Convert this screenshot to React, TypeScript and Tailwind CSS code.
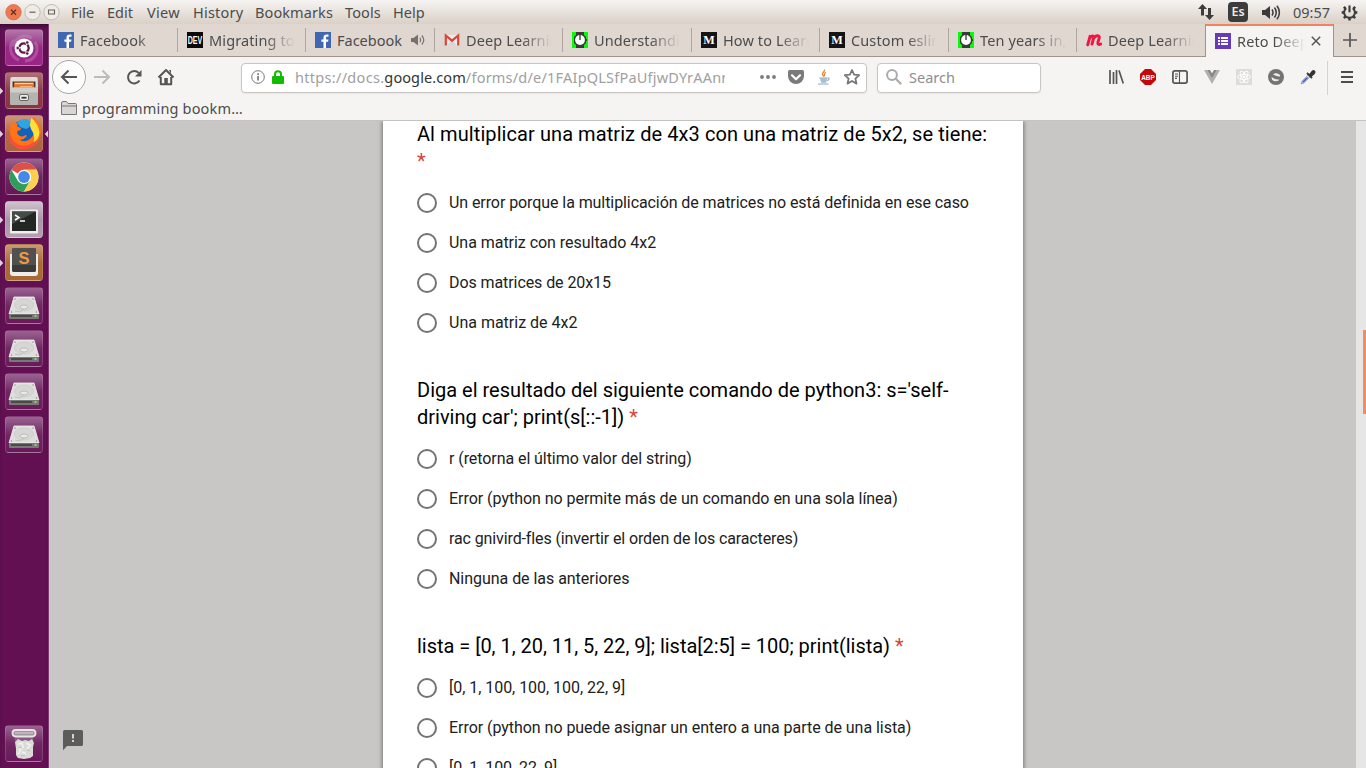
import type { ReactNode } from "react";

const ui = "font-['Noto_Sans',sans-serif] text-[14.5px] leading-5 text-[#4c4c4c] whitespace-nowrap";

const menu = [
  { label: "File", w: "w-[36px]" },
  { label: "Edit", w: "w-[40px]" },
  { label: "View", w: "w-[46px] tracking-[.3px]" },
  { label: "History", w: "w-[62px] tracking-[.2px]" },
  { label: "Bookmarks", w: "w-[90px] tracking-[.1px]" },
  { label: "Tools", w: "w-[48px] tracking-[.1px]" },
  { label: "Help", w: "w-[40px]" },
];

function Facebook() {
  return (
    <svg viewBox="0 0 16 16" className="size-4 shrink-0">
      <rect width="16" height="16" fill="#4267b2" />
      <path d="M11 16V9.8h2.1l.3-2.4H11V5.9c0-.7.2-1.2 1.2-1.2h1.3V2.6c-.2 0-1-.1-1.9-.1-1.9 0-3.1 1.1-3.1 3.2v1.7H6.4v2.4h2.1V16z" fill="#fff" />
    </svg>
  );
}

function Dev() {
  return (
    <svg viewBox="0 0 16 16" className="size-4 shrink-0">
      <rect width="16" height="16" fill="#0a0a0a" />
      <text x="8" y="11.700" textAnchor="middle" textLength="14.500" lengthAdjust="spacingAndGlyphs" className="fill-white font-['Liberation_Sans',sans-serif] text-[10px] font-bold">DEV</text>
    </svg>
  );
}

function Gmail() {
  return (
    <svg viewBox="0 0 16 16" className="size-4 shrink-0">
      <path d="M2 3h12v10.500H2z" fill="#eceaea" />
      <path d="M3 13.500 8 8.500l5 5z" fill="#d6d4d4" />
      <path d="M1.800 13.500V3.500L8 8.700l6.200-5.200v10" fill="none" stroke="#d9463a" strokeWidth="2.200" />
    </svg>
  );
}

function Watch() {
  return (
    <svg viewBox="0 0 16 16" className="size-4 shrink-0">
      <rect width="16" height="16" fill="#00ff00" />
      <path d="M4 0h8v3l2 2v6l-2 2v3H4v-3l-2-2V5l2-2z" fill="#3a3a3a" />
      <circle cx="8" cy="8" r="4.900" fill="#fff" />
      <path d="M8 3v5" stroke="#333" strokeWidth="1.300" />
      <path d="M14 7h1v2h-1z" fill="#3a3a3a" />
    </svg>
  );
}

function Medium() {
  return (
    <svg viewBox="0 0 16 16" className="size-4 shrink-0">
      <rect width="16" height="16" fill="#141414" />
      <text x="8" y="12.400" textAnchor="middle" textLength="11.500" lengthAdjust="spacingAndGlyphs" className="fill-white font-['Liberation_Serif',serif] text-[13.500px] font-bold">M</text>
    </svg>
  );
}

function Meetup() {
  return (
    <svg viewBox="0 0 16 16" className="size-4 shrink-0">
      <path d="M1.700 12.800 4 4.300M3.700 6.300C5 3.500 8 3 7.700 5.800L6 12M7.500 6.800C9 3.200 13.800 2.500 13.300 5.800c-.3 2-2.600 5.500-1 6.400.8.500 1.700.2 2.500-.2" fill="none" stroke="#ee1742" strokeWidth="2.900" strokeLinecap="round" />
    </svg>
  );
}

function Forms() {
  return (
    <svg viewBox="0 0 16 16" className="size-4 shrink-0">
      <rect width="16" height="16" fill="#673ab7" />
      <path d="M3 4h2v2H3zm3 0h7v2H6zM3 7h2v2H3zm3 0h7v2H6zm-3 3h2v2H3zm3 0h7v2H6z" fill="#fff" />
    </svg>
  );
}

function Speaker({ className }: { className: string }) {
  return (
    <svg viewBox="0 0 20 16" className={className}>
      <path d="M1 5.500h3L9 1.500v13L4 10.500H1z" fill="currentColor" />
      <path d="M11 5q2 3 0 6M13.500 3q3.500 5 0 10M16 1.200q4.800 6.800 0 13.600" fill="none" stroke="currentColor" strokeWidth="1.500" />
    </svg>
  );
}

function TabSpeaker() {
  return (
    <svg viewBox="0 0 14 12" className="ml-[3px] h-3 w-[14px] text-[#77716c]">
      <path d="M0 4h2.500L7 .500v11L2.500 8H0z" fill="currentColor" />
      <path d="M8.800 3.800q1.600 2.200 0 4.400M10.800 1.500q4 4.500 0 9" fill="none" stroke="currentColor" strokeWidth="1.200" />
    </svg>
  );
}

function TabLabel({ children, w }: { children: string; w: string }) {
  return (
    <span className={`${w} overflow-hidden tracking-[.12px] [mask-image:linear-gradient(to_right,black_calc(100%-30px),transparent)]`}>
      {children}
    </span>
  );
}

const tabs: { icon: ReactNode; title: string; sound?: boolean; w: string }[] = [
  { icon: <Facebook />, title: "Facebook", w: "w-[129px]" },
  { icon: <Dev />, title: "Migrating to", w: "w-[128px]" },
  { icon: <Facebook />, title: "Facebook", sound: true, w: "w-[129px]" },
  { icon: <Gmail />, title: "Deep Learning", w: "w-[128px]" },
  { icon: <Watch />, title: "Understanding", w: "w-[129px]" },
  { icon: <Medium />, title: "How to Learn", w: "w-[128px]" },
  { icon: <Medium />, title: "Custom eslint", w: "w-[129px]" },
  { icon: <Watch />, title: "Ten years in, n", w: "w-[128px]" },
  { icon: <Meetup />, title: "Deep Learning", w: "w-[128px]" },
];

function SystemBar() {
  return (
    <header className={`${ui} flex h-6 shrink-0 items-center bg-linear-to-b from-[#f6f4f2] to-[#dad0c7] pb-px`}>
      <svg viewBox="0 0 71 24" className="h-6 w-[71px] shrink-0">
        <circle cx="13.500" cy="12.200" r="7.700" fill="#ee7850" stroke="#d8694a" strokeWidth=".8" />
        <path d="m11 9.700 5 5m0-5-5 5" stroke="#5b3427" strokeWidth="1.300" />
        <circle cx="32.500" cy="12.200" r="7.700" fill="#efebe6" stroke="#c3bbb3" />
        <path d="M29.500 12.200h6" stroke="#66605a" strokeWidth="1.200" />
        <circle cx="51.500" cy="12.200" r="7.700" fill="#efebe6" stroke="#c3bbb3" />
        <path d="M48.500 10h6v4h-6z" fill="none" stroke="#66605a" strokeWidth="1.100" />
      </svg>
      {menu.map((m) => (
        <span key={m.label} className={m.w}>{m.label}</span>
      ))}
      <div className="ml-auto flex items-center">
        <svg viewBox="0 0 18 18" className="mt-px mr-[13px] size-[18px] text-[#3c3c3c]">
          <path d="M5.500 1 1 6h3v6.500h3V6h3zM12.500 17 17 12h-3V5h-3v7H8z" fill="currentColor" />
        </svg>
        <span className="mt-px mr-[13px] flex h-5 w-5 items-center justify-center rounded-sm bg-[#3c3c3c] text-[12.500px] font-semibold text-[#efebe7]">Es</span>
        <Speaker className="mt-px mr-3 h-[17px] w-5 text-[#3c3c3c]" />
        <span className="w-[48px]">09:57</span>
        <svg viewBox="0 0 18 18" className="mt-px mr-[8px] size-[17px]">
          <path d="M5.500 4.300a5.800 5.800 0 1 0 7 0" fill="none" stroke="#3c3c3c" strokeWidth="2.200" />
          <path d="M4.800 4.800 3 3M3.300 9H.7M4.800 13.200 3 15M9 14.500v3M13.200 13.200 15 15M14.700 9h2.600M13.200 4.800 15 3" stroke="#3c3c3c" strokeWidth="2.600" />
          <path d="M9 1.500v7.300" stroke="#3c3c3c" strokeWidth="2.200" />
        </svg>
      </div>
    </header>
  );
}

function TabStrip() {
  return (
    <div className={`${ui} flex h-[33px] shrink-0 bg-[#e0d7d0]`}>
      {tabs.map((t, i) => (
        <div key={i} className={`${t.w} flex shrink-0 items-center border-b border-[#9c948d] pb-0`}>
          <div className="flex h-6 flex-1 items-center gap-[6px] pl-[9px]">
            {t.icon}
            {t.sound ? <span>{t.title}</span> : <TabLabel w="w-[86px]">{t.title}</TabLabel>}
            {t.sound && <TabSpeaker />}
          </div>
          {i < 8 && <div className="h-6 w-px bg-[#aea7a1]" />}
        </div>
      ))}
      <div className="flex w-[129px] shrink-0 items-center gap-[6px] border-x border-[#9c948d] bg-[#f5f4f2] pl-[9px] shadow-[inset_0_2px_0_#f0845c]">
        <Forms />
        <TabLabel w="w-[68px]">Reto Deep L</TabLabel>
        <svg viewBox="0 0 10 10" className="size-[10px]"><path d="m.8.8 8.400 8.400m0-8.400L.8 9.200" stroke="#555" strokeWidth="1.500" /></svg>
      </div>
      <div className="flex flex-1 items-center justify-center border-b border-[#9c948d]">
        <svg viewBox="0 0 14 14" className="size-[14px]"><path d="M7 0v14M0 7h14" stroke="#555" strokeWidth="1.700" /></svg>
      </div>
    </div>
  );
}

function NavBar() {
  return (
    <div className={`${ui} flex h-[41px] shrink-0 items-center bg-[#f5f4f2]`}>
      <svg viewBox="0 0 192 41" className="h-[41px] w-[192px] shrink-0" fill="none">
        <circle cx="20" cy="20" r="16.500" fill="#fcfcfc" stroke="#a9a7a5" />
        <path d="M28 20H13.500m6-6.500-6.500 6.500 6.500 6.500" stroke="#555" strokeWidth="2" />
        <path d="M45 20h14.500m-6-6.500 6.500 6.500-6.500 6.500" stroke="#bbb" strokeWidth="2" />
        <path d="M90.500 23.500a6.200 6.200 0 1 1-.8-7.600" stroke="#555" strokeWidth="2" />
        <path d="M92.500 13v6.500h-6.500z" fill="#555" />
        <path d="m109.500 20.500 7.500-7.500 7.500 7.500M111.800 20v7.200h10.400V20" stroke="#555" strokeWidth="2" strokeLinejoin="round" />
        <path d="M115.300 21h3.500v6h-3.500z" fill="#555" />
        <path d="M120 13h2v4z" fill="#555" />
      </svg>
      <div className="flex h-[30px] w-[626px] shrink-0 items-center rounded border border-[#c8c5c2] bg-white pb-px pl-[9px] shadow-[0_1px_2px_rgba(0,0,0,.06)]">
        <svg viewBox="0 0 14 14" className="size-[14px]"><circle cx="7" cy="7" r="6.300" fill="none" stroke="#777" /><path d="M6.200 6h1.700v4.500H6.200zM6.200 3.300h1.700v1.600H6.200z" fill="#777" /></svg>
        <svg viewBox="0 0 12 14" className="ml-[7px] h-[14px] w-3"><path d="M3 7V4.200a3 3 0 0 1 6 0V7" fill="none" stroke="#12bc00" strokeWidth="2" /><rect y="6" width="12" height="8" rx="1" fill="#12bc00" /></svg>
        <span className="ml-[11px] w-[430px] overflow-hidden tracking-[.21px] text-[#a0a0a0]">
          <span className="tracking-[.3px]">https://docs.</span><span className="tracking-[.1px] text-[#333]">google.com</span>/forms/d/e/1FAIpQLSfPaUfjwDYrAAnn
        </span>
        <svg viewBox="0 0 16 4" className="ml-[35px] h-1 w-4 shrink-0" fill="#7a7a7a"><circle cx="2" cy="2" r="1.900" /><circle cx="8" cy="2" r="1.900" /><circle cx="14" cy="2" r="1.900" /></svg>
        <svg viewBox="0 0 16 15" className="ml-3 h-[15px] w-4 shrink-0"><path d="M1.500 0h13Q16 0 16 1.500V6a8 8 0 0 1-16 0V1.500Q0 0 1.500 0z" fill="#7a7a7a" /><path d="m4 5.300 4 3.900 4-3.900" fill="none" stroke="#fff" strokeWidth="2.200" strokeLinecap="round" strokeLinejoin="round" /></svg>
        <svg viewBox="0 0 16 16" className="ml-3 size-4 shrink-0" fill="none">
          <path d="M8.500.5c1 2-3 3-2 5.200l1.300 1.800M9.800 3.200C7.500 4.500 8.800 5.500 8.200 7.500" stroke="#ef8535" strokeWidth="1.300" />
          <path d="M3.500 9h8l-1 4.500h-5z" fill="#c4d5e3" />
          <path d="M3.500 9h7.500M4.500 11h6M5 13h5M2 15h10.500M11.500 9c2-.7 2.500 1.800-.5 2.500" stroke="#86a9c7" strokeWidth="1.100" />
        </svg>
        <svg viewBox="0 0 16 16" className="ml-3 size-4 shrink-0"><path d="m8 1 2.100 4.700 5.100.5-3.800 3.400 1.100 5L8 12l-4.500 2.600 1.100-5L.8 6.200l5.100-.5z" fill="none" stroke="#777" strokeWidth="1.800" strokeLinejoin="round" /></svg>
      </div>
      <div className="ml-[10px] flex h-[30px] w-[164px] shrink-0 items-center gap-[7px] rounded border border-[#c8c5c2] bg-white pb-px pl-2 text-[#8e8e8e] shadow-[0_1px_2px_rgba(0,0,0,.06)]">
        <svg viewBox="0 0 16 16" className="size-4"><circle cx="6" cy="6" r="4.900" fill="none" stroke="#aaa" strokeWidth="2" /><path d="m9.800 9.800 5.400 5.400" stroke="#aaa" strokeWidth="2.200" /></svg>
        Search
      </div>
      <div className="ml-[67px] flex shrink-0 items-center gap-4 pb-px">
        <svg viewBox="0 0 16 16" className="size-4"><path d="M2 1v14M5.500 3v12M8.500 1v14M11 1.500l4.300 13" stroke="#555" strokeWidth="1.700" /></svg>
        <svg viewBox="0 0 16 16" className="size-4">
          <path d="M5 0h6l5 5v6l-5 5H5l-5-5V5z" fill="#c40808" />
          <text x="8" y="11" textAnchor="middle" textLength="13.500" lengthAdjust="spacingAndGlyphs" className="fill-white font-['Liberation_Sans',sans-serif] text-[8px] font-bold">ABP</text>
        </svg>
        <svg viewBox="0 0 16 16" className="size-4"><rect x=".9" y="1.900" width="14.200" height="12.200" rx="2" fill="none" stroke="#555" strokeWidth="1.700" /><path d="M7.500 2v12M3 5h3M3 7.200h3M3 9.400h2" stroke="#555" strokeWidth="1.100" /></svg>
        <svg viewBox="0 0 16 16" className="size-4"><path d="M0 1h3.500L8 9l4.500-8H16L8 15z" fill="#b0b0b0" /><path d="M3.300 1H6l2 3.500L10 1h2.700L8 9.200z" fill="#858585" /></svg>
        <svg viewBox="0 0 16 16" className="size-4"><rect width="16" height="16" fill="#dedcda" /><g fill="none" stroke="#fff" strokeWidth=".9"><ellipse cx="8" cy="8" rx="6.500" ry="2.500" /><ellipse cx="8" cy="8" rx="6.500" ry="2.500" transform="rotate(60 8 8)" /><ellipse cx="8" cy="8" rx="6.500" ry="2.500" transform="rotate(120 8 8)" /></g><circle cx="8" cy="8" r="1.300" fill="#fff" /></svg>
        <svg viewBox="0 0 16 16" className="size-4"><circle cx="8" cy="8" r="8" fill="#747474" /><path d="M5 5.500Q8.500 2.800 12 6v1.500Q9 7.700 5 5.500zM3.500 8Q7 10.800 11.500 10.700 7.500 14 4 10.700z" fill="#ececec" /></svg>
        <svg viewBox="0 0 16 16" className="size-4"><path d="m1 15 1-3 6-6 2 2-6 6z" fill="#d8dce6" stroke="#8b8f9a" strokeWidth=".7" /><path d="m2 14 1-2 3.500-3.500h2L4 13z" fill="#2c52cf" /><path d="m7 4 5 5M9.500 6l2.500-3q1.500-1.500 2.300-.7t-.5 2.300L11 7" fill="#333" stroke="#333" strokeWidth="1.800" /></svg>
      </div>
      <div className="ml-[11px] h-[34px] w-px bg-[#d5d3d0]" />
      <svg viewBox="0 0 12 12" className="mb-px ml-[13px] size-3 shrink-0"><path d="M0 1h12M0 6h12M0 11h12" stroke="#4c4c4c" strokeWidth="1.800" /></svg>
    </div>
  );
}

function Tile({ tone, running, active, children }: { tone: string; running?: boolean; active?: boolean; children: ReactNode }) {
  return (
    <div className="flex h-[37px] w-full shrink-0 items-center">
      <svg viewBox="0 0 5 10" className="h-[10px] w-[5px] shrink-0">{running && <path d="M0 1.500 3.200 5 0 8.500z" fill="#dfd3dc" />}</svg>
      <div className={`flex h-[37px] w-[38px] items-center justify-center rounded-[4px] border border-white/15 bg-linear-to-b ${tone}`}>
        <svg viewBox="0 0 36 36" className="size-9">{children}</svg>
      </div>
      <svg viewBox="0 0 5 10" className="h-[10px] w-[5px] shrink-0">{active && <path d="M5 1.500 1.800 5 5 8.500z" fill="#dfd3dc" />}</svg>
    </div>
  );
}

const glass = "from-[#9a6391] via-[#702763] to-[#6a195a]";

function Drive() {
  return (
    <Tile tone={glass}>
      <path d="M8 9h20l5 17H3z" fill="#dededc" stroke="#f2f2f2" strokeWidth=".8" />
      <path d="M3 26h30v4q0 1-1 1H4q-1 0-1-1z" fill="#777975" />
      <path d="M5 28h21" stroke="#4a4b49" strokeWidth="2" />
      <path d="M28.500 28h2" stroke="#b5d98b" strokeWidth="1.500" />
      <ellipse cx="18" cy="17" rx="9.500" ry="6" fill="#d6d7d4" stroke="#cbccc9" strokeWidth=".8" />
      <ellipse cx="18" cy="19" rx="4" ry="2" fill="#e8e8e6" stroke="#b4b5b2" strokeWidth=".8" />
      <path d="m9 23 5 1 4-3" fill="none" stroke="#c0c2bf" />
      <circle cx="9" cy="11" r=".7" fill="#888" /><circle cx="27" cy="11" r=".7" fill="#888" />
      <circle cx="5.500" cy="24" r=".7" fill="#888" /><circle cx="30.500" cy="24" r=".7" fill="#888" />
    </Tile>
  );
}

function Launcher() {
  return (
    <nav className="flex w-[49px] shrink-0 flex-col gap-[6px] border-r border-[#7f3a73] bg-[#621052] pt-[5px] pb-[6px] shadow-[inset_0_4px_4px_-2px_rgba(0,0,0,.45)]">
      <Tile tone="from-[#b277aa] via-[#962985] to-[#9c2487]">
        <path d="M7 17C8 8 18 3 26 8M29 12c5 8 0 19-10 19M13 30C4 27 2 16 8 10" fill="none" stroke="#d39bc9" strokeWidth="3" opacity=".35" />
        <circle cx="18" cy="18" r="9.500" fill="#fff" />
        <circle cx="18" cy="18" r="4.700" fill="none" stroke="#5e1750" strokeWidth="2.300" strokeDasharray="8.800 1.040" strokeDashoffset="4.400" />
        <circle cx="11.700" cy="18" r="1.700" fill="#5e1750" stroke="#fff" strokeWidth=".7" />
        <circle cx="21.200" cy="12.500" r="1.700" fill="#5e1750" stroke="#fff" strokeWidth=".7" />
        <circle cx="21.200" cy="23.500" r="1.700" fill="#5e1750" stroke="#fff" strokeWidth=".7" />
      </Tile>
      <Tile tone="from-[#ae7077] via-[#8e3b48] to-[#8b3444]" running>
        <path d="M6 4h24q1.500 0 1.700 1.500L32 16H4l.3-10.500Q4.500 4 6 4z" fill="#dddcd8" />
        <path d="M6.500 8.500h23V15h-23z" fill="#4a352a" />
        <path d="M8 9.500h20V15H8z" fill="#e2752f" /><path d="M9 10.500h18" stroke="#f9d8ae" strokeWidth="1.200" /><path d="M14 13.500h12" stroke="#f7b27a" />
        <path d="M4 14.500h28V31q0 1-1 1H5q-1 0-1-1z" fill="#b3b3b0" />
        <path d="M4 14.500h28v5H4z" fill="#cdcdca" />
        <rect x="13.500" y="21.500" width="9" height="6" rx="1.500" fill="#eee" stroke="#666" /><path d="M15.500 24.700h5" stroke="#333" strokeWidth="1.800" />
      </Tile>
      <Tile tone="from-[#cd9676] via-[#b56a49] to-[#ae6240]" running active>
        <circle cx="18" cy="17" r="13" fill="#1560b8" />
        <path d="M11 6q6-4.500 12-2l2 3q-1 5-5 6l-6-2z" fill="#2fa4e4" />
        <path d="M7 4q-1 2 0 3.500 3-1 5 0-1 1.500-.5 3l3.500 1.700q0 2-3.500 2.800-1 2.500 1.500 4.500 4 2 6.500-.5 2 0 1 1.500-3 4-7.500 3 6 3.500 11-.5t3-10q2 1 2.500 3 .5-6-3-10-1-2 1-5 7 5 7.500 14.500Q32.500 32 18 33 4.500 32.500 3 19q-.3-5 1.500-9Q5 6 7 4z" fill="#ff7417" />
        <path d="M25.500 2q7 6 8 14.500-1 7-6 10.500 2-8-2-13-3-5 0-12z" fill="#ffe03a" />
        <path d="M27 26q-5 5-12 3.500Q7 28 4.500 19q-1-3 0-7-2 3-1.500 8Q5 32 18 33q11-.5 14-10-2 2-5 3z" fill="#ff3b4a" opacity=".75" />
      </Tile>
      <Tile tone="from-[#9a6391] via-[#6c285f] to-[#651755]">
        <circle cx="18" cy="18" r="14.500" fill="#fff" />
        <path d="M18 18 5.400 10.800A14.500 14.500 0 0 1 30.600 10.800H18z" fill="#dc5048" />
        <path d="M5.400 10.800A14.500 14.500 0 0 0 18 32.500l6.300-10.900L18 18l-6.300 3.600z" fill="#2f9e5b" />
        <path d="M30.600 10.800A14.500 14.500 0 0 1 18 32.500l6.300-10.900L24 14l-6-3.200z" fill="#fcd04f" />
        <circle cx="18" cy="18" r="7.200" fill="#fff" /><circle cx="18" cy="18" r="5.900" fill="#4688e8" />
      </Tile>
      <Tile tone="from-[#d0c2cd] via-[#a995a7] to-[#b3a1b1]" running>
        <rect x="4" y="7.500" width="28" height="24" rx="1" fill="#eeeeec" />
        <rect x="6" y="9.500" width="24" height="19.500" fill="#222724" />
        <path d="M6 9.500h24L6 22z" fill="#454b48" />
        <path d="m9 13 4 2.500L9 18M14 19h5" fill="none" stroke="#fff" strokeWidth="1.500" />
      </Tile>
      <Tile tone="from-[#c79b73] via-[#aa6b39] to-[#a96831]" running>
        <path d="M4 9h28v19q0 3-3 3H7q-3 0-3-3z" fill="#ededeb" />
        <path d="M6 4q0-1 1-1h22q1 0 1 1v21q0 2-2 2H8q-2 0-2-2z" fill="#515151" />
        <path d="M6 20h24v5q0 2-2 2H8q-2 0-2-2z" fill="#3a3a3a" />
        <text x="18" y="19" textAnchor="middle" textLength="11" lengthAdjust="spacingAndGlyphs" className="fill-[#f09a42] font-['Liberation_Sans',sans-serif] text-[17px] font-bold">S</text>
      </Tile>
      <Drive /><Drive /><Drive /><Drive />
      <div className="mt-auto">
        <Tile tone={glass}>
          <path d="M8 8h20l-3 24H11z" fill="#b8a2b5" opacity=".3" />
          <path d="m9 16 3-3 4 2 3-1 4 1 3-2 2 4-1 4v9l-3 2-6 1-6-1-2-3v-7z" fill="#d9dbd7" />
          <path d="m12 18 4-1 1 4-4 3m7-7 4 2-3 4m-5 3 4 2m-8 0 3-4" fill="none" stroke="#eeefed" strokeWidth="2" />
          <path d="m13 21 3 1m5 2 3 1m-9 5 4-1" fill="none" stroke="#b9bcb6" />
          <rect x="6.500" y="4" width="23" height="6.500" rx="3.200" fill="#a3959f" stroke="#e6e6e4" strokeWidth="1.800" />
          <path d="M9 7h18" stroke="#c9c3c7" strokeWidth="1.500" />
        </Tile>
      </div>
    </nav>
  );
}

type Line = { text: string; track: string };

const questions: { title: string; track: string; options: Line[] }[] = [
  {
    title: "Al multiplicar una matriz de 4x3 con una matriz de 5x2, se tiene:",
    track: "tracking-[.077px]",
    options: [
      { text: "Un error porque la multiplicación de matrices no está definida en ese caso", track: "tracking-[-.08px] [font-variant-ligatures:common-ligatures]" },
      { text: "Una matriz con resultado 4x2", track: "tracking-[-.035px]" },
      { text: "Dos matrices de 20x15", track: "tracking-[-.08px]" },
      { text: "Una matriz de 4x2", track: "tracking-normal" },
    ],
  },
  {
    title: "Diga el resultado del siguiente comando de python3: s='self-driving car'; print(s[::-1])",
    track: "tracking-normal",
    options: [
      { text: "r (retorna el último valor del string)", track: "tracking-[-.07px]" },
      { text: "Error (python no permite más de un comando en una sola línea)", track: "tracking-[-.035px]" },
      { text: "rac gnivird-fles (invertir el orden de los caracteres)", track: "tracking-[-.115px]" },
      { text: "Ninguna de las anteriores", track: "tracking-[-.04px]" },
    ],
  },
  {
    title: "lista = [0, 1, 20, 11, 5, 22, 9]; lista[2:5] = 100; print(lista)",
    track: "tracking-[-.03px]",
    options: [
      { text: "[0, 1, 100, 100, 100, 22, 9]", track: "tracking-[-.035px]" },
      { text: "Error (python no puede asignar un entero a una parte de una lista)", track: "tracking-[-.045px]" },
      { text: "[0, 1, 100, 22, 9]", track: "tracking-[-.04px]" },
    ],
  },
];

function FormPage() {
  return (
    <main className="flex min-h-0 flex-1 overflow-hidden bg-[#c8c7c5]">
      <div className="flex w-[334px] shrink-0 flex-col justify-end pb-[17px] pl-[14px]">
        <svg viewBox="0 0 20 21" className="h-[21px] w-5"><path d="M1.500 0h17Q20 0 20 1.500v13q0 1.500-1.500 1.500H4l-4 4.300V1.500Q0 0 1.500 0z" fill="#5c5c5b" /><path d="M9 4h2v4.500H9zm0 6h2v2H9z" fill="#d5d4d2" /></svg>
      </div>
      <div className="flex h-[760px] w-[640px] shrink-0 flex-col gap-[34px] bg-white px-[34px] font-[Roboto,sans-serif] shadow-[0_1px_4px_1px_rgba(0,0,0,.4)]">
        {questions.map((q) => (
          <section key={q.title} className="shrink-0">
            <h2 className={`${q.track} mb-[8px] text-[20px] leading-[27px] text-black`}>
              {q.title} <span className="text-[#db4437]">*</span>
            </h2>
            {q.options.map((o) => (
              <label key={o.text} className="flex h-10 items-center gap-3 text-[16px] text-[#212121]">
                <span className="size-5 rounded-full border-2 border-[#737373]" />
                <span className={o.track}>{o.text}</span>
              </label>
            ))}
          </section>
        ))}
      </div>
      <div className="ml-auto flex w-[10px] justify-end bg-[#e6e6e6]">
        <div className="mt-[209px] h-[84px] w-[3px] bg-[#f08d66]" />
      </div>
    </main>
  );
}

export default function App() {
  return (
    <div className="flex h-screen w-full flex-col overflow-hidden">
      <SystemBar />
      <div className="flex min-h-0 flex-1">
        <Launcher />
        <div className="flex min-w-0 flex-1 flex-col">
          <TabStrip />
          <NavBar />
          <div className={`${ui} flex h-[23px] shrink-0 items-center gap-[5px] border-b border-[#c5c3c1] bg-[#f5f4f2] pb-[3px] pl-3 tracking-[.16px]`}>
            <svg viewBox="0 0 16 14" className="h-[14px] w-4"><path d="M.5 2Q.5.500 2 .500h3.500L7 2.500h7.500q1 0 1 1V13.500H.5zM.5 5h15" fill="#d8d5d2" stroke="#777" /></svg>
            programming bookm…
          </div>
          <FormPage />
        </div>
      </div>
    </div>
  );
}
